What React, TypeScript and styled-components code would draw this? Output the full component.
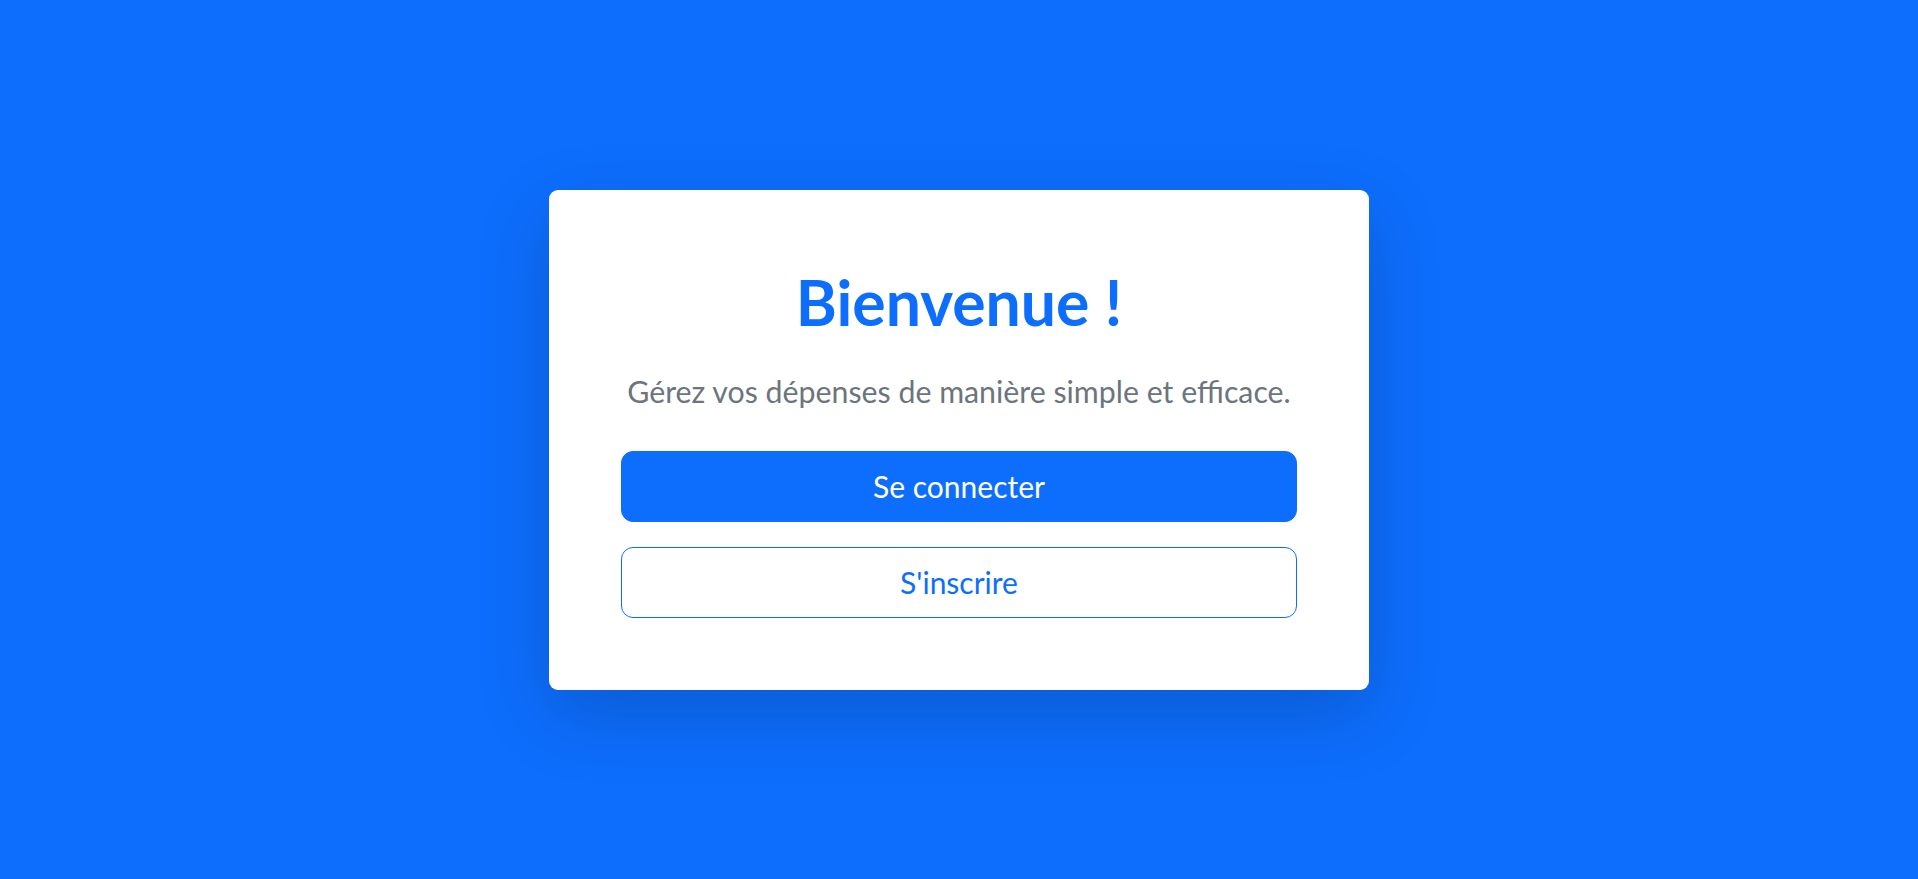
import React from "react";
import styled, { createGlobalStyle } from "styled-components";

const GlobalStyle = createGlobalStyle`
  html, body, #root { margin: 0; padding: 0; height: 100%; }
  body {
    background: #0d6efd;
    font-family: "Lato", "Open Sans", sans-serif;
  }
  * { box-sizing: border-box; }
`;

const Page = styled.main`
  min-height: 100vh;
  display: flex;
  align-items: center;
  justify-content: center;
  background: #0d6efd;
`;

const Card = styled.section`
  width: 820px;
  background: #ffffff;
  border-radius: 9px;
  padding: 72px;
  box-shadow: 0 24px 72px rgba(0, 0, 0, 0.175);
  display: flex;
  flex-direction: column;
  align-items: stretch;
  text-align: center;
`;

const Title = styled.h1`
  margin: 0;
  font-size: 62.5px;
  font-weight: 700;
  line-height: 80px;
  color: #0d6efd;
`;

const Lead = styled.p`
  margin: 27px 0 38px;
  font-size: 30.3px;
  font-weight: 400;
  line-height: 44px;
  color: #6c757d;
`;

const Actions = styled.div`
  display: flex;
  flex-direction: column;
  gap: 25px;
`;

const Button = styled.button<{ $variant: "solid" | "outline" }>`
  height: 71px;
  width: 100%;
  display: flex;
  align-items: center;
  justify-content: center;
  border-radius: 12px;
  font-family: "Lato", "Open Sans", sans-serif;
  font-size: 30px;
  font-weight: 400;
  line-height: 1.2;
  cursor: pointer;
  border: 1px solid #0d6efd;
  background: ${(p) => (p.$variant === "solid" ? "#0d6efd" : "#ffffff")};
  color: ${(p) => (p.$variant === "solid" ? "#ffffff" : "#0d6efd")};
`;

export default function App() {
  return (
    <>
      <GlobalStyle />
      <Page>
        <Card>
          <Title>Bienvenue !</Title>
          <Lead>Gérez vos dépenses de manière simple et efficace.</Lead>
          <Actions>
            <Button $variant="solid">Se connecter</Button>
            <Button $variant="outline">S'inscrire</Button>
          </Actions>
        </Card>
      </Page>
    </>
  );
}
